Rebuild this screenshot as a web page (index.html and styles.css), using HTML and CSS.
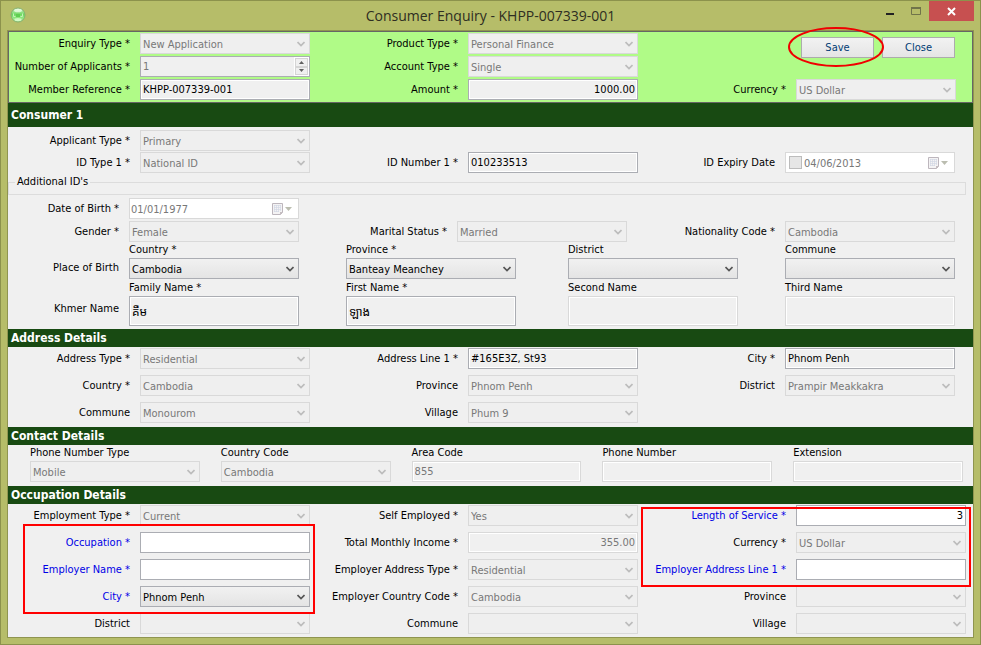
FILE: index.html
```html
<!DOCTYPE html>
<html lang="en">
<head>
<meta charset="utf-8">
<title>Consumer Enquiry - KHPP-007339-001</title>
<link rel="stylesheet" href="styles.css">
</head>
<body>
<div class="window">
  <header class="titlebar">
    <svg class="app-icon" viewBox="0 0 16 16" aria-hidden="true">
      <defs><linearGradient id="orb" x1="0" y1="0" x2="0" y2="1"><stop offset="0" stop-color="#d5f5cd"/><stop offset=".45" stop-color="#6fd862"/><stop offset="1" stop-color="#b5f7a2"/></linearGradient></defs>
      <circle cx="8" cy="8" r="7" fill="url(#orb)" stroke="#84b070"/>
      <ellipse cx="8" cy="3.500" rx="4" ry="1.800" fill="#f4fff0" opacity=".7"/>
      <path d="M3.500 6.500v3h2M12.500 6.500v3h-2" fill="none" stroke="#c4f3b8"/>
      <path d="M6 7h4v3H6z" fill="#5fce52"/>
      <ellipse cx="8" cy="12.500" rx="3.500" ry="1.500" fill="#e2ffd9" opacity=".7"/>
    </svg>
    <h1>Consumer Enquiry - KHPP-007339-001</h1>
    <div class="window-controls">
      <button type="button" class="wc" aria-label="Minimize"><svg viewBox="0 0 11 9"><path d="M1 6h8v2H1z" fill="#222"/></svg></button>
      <button type="button" class="wc" aria-label="Maximize"><svg viewBox="0 0 11 9"><path d="M.5 1.500h9v6h-9z" fill="none" stroke="#70744a"/><path d="M0 1h10" stroke="#70744a" stroke-width="2"/></svg></button>
      <button type="button" class="wc wc-close" aria-label="Close window"><svg viewBox="0 0 11 9"><path d="M2 1l7 7M9 1l-7 7" stroke="#fff" stroke-width="2" fill="none"/></svg></button>
    </div>
  </header>

  <form class="client">
    <section class="grid summary">
      <label for="enquiry">Enquiry Type *</label>
      <select id="enquiry" disabled><option>New Application</option></select>
      <label for="product">Product Type *</label>
      <select id="product" disabled><option>Personal Finance</option></select>
      <div class="actions">
        <span class="marked">
          <button type="button" class="btn">Save</button>
          <svg class="ring" viewBox="0 0 96 40" aria-hidden="true"><ellipse cx="48" cy="20" rx="47" ry="19" fill="none" stroke="#f00000" stroke-width="2"/></svg>
        </span>
        <button type="button" class="btn">Close</button>
      </div>

      <label for="applicants">Number of Applicants *</label>
      <div class="spinner">
        <input id="applicants" type="text" value="1" disabled>
        <span class="arrows">
          <button type="button" aria-label="Increase" disabled><svg viewBox="0 0 5 3"><path d="M0 3l2.500-3L5 3z"/></svg></button>
          <button type="button" aria-label="Decrease" disabled><svg viewBox="0 0 5 3"><path d="M0 0l2.500 3L5 0z"/></svg></button>
        </span>
      </div>
      <label for="account">Account Type *</label>
      <select id="account" disabled><option>Single</option></select>

      <label class="first" for="member">Member Reference *</label>
      <input id="member" type="text" value="KHPP-007339-001" readonly>
      <label for="amount">Amount *</label>
      <input id="amount" class="num" type="text" value="1000.00" readonly>
      <label for="currency">Currency *</label>
      <select id="currency" disabled><option>US Dollar</option></select>
    </section>

    <h2 class="tall">Consumer 1</h2>
    <section>
      <div class="grid identity">
        <label for="applicant">Applicant Type *</label>
        <select id="applicant" disabled><option>Primary</option></select>
        <label class="first" for="idtype">ID Type 1 *</label>
        <select id="idtype" disabled><option>National ID</option></select>
        <label for="idnumber">ID Number 1 *</label>
        <input id="idnumber" type="text" value="010233513" readonly>
        <label for="expiry">ID Expiry Date</label>
        <div class="date">
          <input type="checkbox" aria-label="Expiry date set" disabled>
          <input id="expiry" type="text" value="04/06/2013" disabled>
          <svg class="cal" viewBox="0 0 22 14" aria-hidden="true"><path d="M1.500 1.500h10v9l-2 2h-8z" fill="#f4f3f4" stroke="#bdb6bd"/><path d="M3 3.500h7M3 5.500h7M3 7.500h7M3 9.500h5M3.500 3v7M5.500 3v7M7.500 3v7M9.500 3v6" stroke="#ced5e2" stroke-width=".6"/><path d="M9 13v-3h3z" fill="#c5bec2"/><path d="M14 5h7l-3.500 4z" fill="#bbbdb0"/></svg>
        </div>
      </div>

      <fieldset><legend>Additional ID's</legend></fieldset>

      <div class="grid personal">
        <label for="dob">Date of Birth *</label>
        <div class="date">
          <input id="dob" type="text" value="01/01/1977" disabled>
          <svg class="cal" viewBox="0 0 22 14" aria-hidden="true"><path d="M1.500 1.500h10v9l-2 2h-8z" fill="#f4f3f4" stroke="#bdb6bd"/><path d="M3 3.500h7M3 5.500h7M3 7.500h7M3 9.500h5M3.500 3v7M5.500 3v7M7.500 3v7M9.500 3v6" stroke="#ced5e2" stroke-width=".6"/><path d="M9 13v-3h3z" fill="#c5bec2"/><path d="M14 5h7l-3.500 4z" fill="#bbbdb0"/></svg>
        </div>
        <label class="first" for="gender">Gender *</label>
        <select id="gender" disabled><option>Female</option></select>
        <label for="marital">Marital Status *</label>
        <select id="marital" disabled><option>Married</option></select>
        <label for="nationality">Nationality Code *</label>
        <select id="nationality" disabled><option>Cambodia</option></select>
      </div>

      <div class="grid birth">
        <span class="row-name">Place of Birth</span>
        <div class="stack f1"><label for="bcountry">Country *</label><select id="bcountry"><option>Cambodia</option></select></div>
        <div class="stack f2"><label for="bprovince">Province *</label><select id="bprovince"><option>Banteay Meanchey</option></select></div>
        <div class="stack f3"><label for="bdistrict">District</label><select id="bdistrict"><option></option></select></div>
        <div class="stack f4"><label for="bcommune">Commune</label><select id="bcommune"><option></option></select></div>
      </div>
      <div class="grid birth names">
        <span class="row-name">Khmer Name</span>
        <div class="stack f1"><label for="family">Family Name *</label><input id="family" type="text" lang="km" value="គឹម" readonly></div>
        <div class="stack f2"><label for="firstname">First Name *</label><input id="firstname" type="text" lang="km" value="ឡាង" readonly></div>
        <div class="stack f3"><label for="second">Second Name</label><input id="second" type="text" disabled></div>
        <div class="stack f4"><label for="third">Third Name</label><input id="third" type="text" disabled></div>
      </div>
    </section>

    <h2>Address Details</h2>
    <section class="grid address">
      <label for="addrtype">Address Type *</label>
      <select id="addrtype" disabled><option>Residential</option></select>
      <label for="line1">Address Line 1 *</label>
      <input id="line1" type="text" value="#165E3Z, St93" readonly>
      <label for="city">City *</label>
      <input id="city" type="text" value="Phnom Penh" readonly>
      <label for="acountry">Country *</label>
      <select id="acountry" disabled><option>Cambodia</option></select>
      <label for="aprovince">Province</label>
      <select id="aprovince" disabled><option>Phnom Penh</option></select>
      <label for="adistrict">District</label>
      <select id="adistrict" disabled><option>Prampir Meakkakra</option></select>
      <label for="acommune">Commune</label>
      <select id="acommune" disabled><option>Monourom</option></select>
      <label for="avillage">Village</label>
      <select id="avillage" disabled><option>Phum 9</option></select>
    </section>

    <h2>Contact Details</h2>
    <section class="contact">
      <div class="stack"><label for="ptype">Phone Number Type</label><select id="ptype" disabled><option>Mobile</option></select></div>
      <div class="stack"><label for="pcountry">Country Code</label><select id="pcountry" disabled><option>Cambodia</option></select></div>
      <div class="stack"><label for="parea">Area Code</label><input id="parea" type="text" value="855" disabled></div>
      <div class="stack"><label for="pnumber">Phone Number</label><input id="pnumber" type="text" disabled></div>
      <div class="stack"><label for="pext">Extension</label><input id="pext" type="text" disabled></div>
    </section>

    <h2>Occupation Details</h2>
    <section class="grid occupation">
      <label for="emptype">Employment Type *</label>
      <select id="emptype" disabled><option>Current</option></select>
      <label for="self">Self Employed *</label>
      <select id="self" disabled><option>Yes</option></select>
      <label class="key" for="service">Length of Service *</label>
      <input id="service" class="num edit" type="text" value="3">

      <label class="key" for="occupation">Occupation *</label>
      <input id="occupation" class="edit" type="text">
      <label for="income">Total Monthly Income *</label>
      <input id="income" class="num" type="text" value="355.00" disabled>
      <label for="ocurrency">Currency *</label>
      <select id="ocurrency" disabled><option>US Dollar</option></select>

      <label class="key" for="employer">Employer Name *</label>
      <input id="employer" class="edit" type="text">
      <label for="eaddrtype">Employer Address Type *</label>
      <select id="eaddrtype" disabled><option>Residential</option></select>
      <label class="key" for="eline1">Employer Address Line 1 *</label>
      <input id="eline1" class="edit" type="text">

      <label class="key" for="ecity">City *</label>
      <select id="ecity"><option>Phnom Penh</option></select>
      <label for="ecountry">Employer Country Code *</label>
      <select id="ecountry" disabled><option>Cambodia</option></select>
      <label for="eprovince">Province</label>
      <select id="eprovince" disabled><option></option></select>

      <label for="edistrict">District</label>
      <select id="edistrict" disabled><option></option></select>
      <label for="ecommune">Commune</label>
      <select id="ecommune" disabled><option></option></select>
      <label for="evillage">Village</label>
      <select id="evillage" disabled><option></option></select>

      <div class="highlight highlight-left"></div>
      <div class="highlight highlight-right"></div>
    </section>
  </form>
</div>
</body>
</html>
```
FILE: styles.css
```css
* { box-sizing: border-box; }

body {
  margin: 0;
  font: 11px/14px "DejaVu Sans Condensed", "Noto Sans", "Noto Sans Khmer", sans-serif;
  color: #000;
}

button, input, select { font: inherit; color: inherit; margin: 0; border-radius: 0; }

.window {
  min-height: 100vh;
  display: flex;
  flex-direction: column;
  padding: 0 6px 6px;
  border: 1px solid #8c924c;
  background: #b6bd69;
}

/* Title bar */
.titlebar {
  display: grid;
  grid-template-columns: 1fr auto 1fr;
  height: 29px;
}
.app-icon { width: 16px; height: 16px; margin: 6px 0 0 3px; }
.titlebar h1 {
  margin: 0;
  font: 14px/29px "Open Sans", "Noto Sans", sans-serif;
  color: #2e2e22;
}
.window-controls { display: flex; justify-content: flex-end; align-items: flex-start; }
.wc {
  width: 26px;
  height: 20px;
  padding: 0;
  border: 0;
  background: none;
}
.wc svg { display: block; width: 11px; height: 9px; margin: 0 auto; }
.wc-close { width: 45px; background: #c75050; }

/* Client area */
.client {
  flex: 1;
  border: 1px solid #8f9550;
  background: #f0f0f0;
}
h2 {
  margin: 0;
  padding: 0 3px;
  font: bold 12px/18px "DejaVu Sans Condensed", "Noto Sans", sans-serif;
  color: #fff;
  background: #184a12;
}
h2.tall { line-height: 24px; }

.grid { display: grid; grid-auto-rows: 21px; }
.grid > label {
  padding-right: 10px;
  line-height: 22px;
  text-align: right;
  white-space: nowrap;
}
.first { grid-column: 1; }
.key { color: #0000e6; }

/* Controls */
select, input[type="text"] {
  width: 100%;
  min-width: 0;
  height: 21px;
  border: 1px solid #abadb3;
  outline: 0;
}
select {
  appearance: none;
  padding: 2px 16px 0 2px;
  background:
    url("data:image/svg+xml,%3Csvg xmlns='http://www.w3.org/2000/svg' width='8' height='6'%3E%3Cpath d='M.5 1L4 4.500 7.500 1' fill='none' stroke='%23555' stroke-width='1.700'/%3E%3C/svg%3E") no-repeat right 4px center,
    linear-gradient(#f1f1f1, #e4e4e4);
}
select:disabled {
  opacity: 1;
  color: #787878;
  border-color: #d9d9d9;
  background:
    url("data:image/svg+xml,%3Csvg xmlns='http://www.w3.org/2000/svg' width='8' height='6'%3E%3Cpath d='M.5 1L4 4.500 7.500 1' fill='none' stroke='%23bcbcbc' stroke-width='1.700'/%3E%3C/svg%3E") no-repeat right 4px center,
    #efefef;
}
input[type="text"] {
  padding: 0 2px;
  background: #f0f0f0;
  box-shadow: inset 0 0 0 1px #fff;
}
input[type="text"]:disabled { color: #787878; border-color: #d9d9d9; }
input[type="text"].edit { background: #fff; }
input[type="text"].num { text-align: right; }
input:lang(km) { font-size: 12px; }

.spinner {
  display: flex;
  height: 21px;
  border: 1px solid #abadb3;
  background: #f0f0f0;
}
.spinner input[type="text"] { flex: 1; height: auto; padding: 0 2px; border: 0; box-shadow: none; }
.arrows { display: flex; flex-direction: column; width: 15px; padding: 1px; background: #fff; }
.arrows button {
  flex: 1;
  display: flex;
  align-items: center;
  justify-content: center;
  padding: 0;
  border: 1px solid #d5d5d5;
  background: #f0f0f0;
}
.arrows svg { width: 5px; height: 3px; fill: #606060; }

.date {
  display: flex;
  align-items: center;
  height: 21px;
  padding-right: 5px;
  border: 1px solid #d9d9d9;
  background: #fff;
}
.date input[type="text"] { flex: 1; height: 19px; padding: 1px 1px 0; border: 0; background: none; }
.date input[type="checkbox"] {
  appearance: none;
  flex: none;
  width: 13px;
  height: 13px;
  margin: 0 1px 0 3px;
  border: 1px solid #bcbcbc;
  background: #e6e6e6;
}
.cal { flex: none; width: 22px; height: 14px; }

.btn {
  width: 73px;
  height: 21px;
  padding: 0;
  border: 1px solid #acacac;
  background: linear-gradient(#f2f2f2, #e5e5e5);
  color: #003c74;
}

/* Summary panel */
.summary {
  grid-template-columns: 131fr 170fr 158fr 170fr 158fr 160fr;
  row-gap: 2px;
  padding: 1px 16px 2px 0;
  border: 1px solid #666;
  background: #b0fb87;
}
.actions {
  grid-column: 5 / 7;
  grid-row: 1 / span 2;
  display: flex;
  justify-content: flex-end;
  align-items: flex-start;
  gap: 8px;
  padding: 4px 1px 0 0;
}
.marked { position: relative; display: flex; }
.ring {
  position: absolute;
  left: -13px;
  top: -10px;
  width: 96px;
  height: 40px;
  pointer-events: none;
}

/* Consumer */
.identity {
  grid-template-columns: 132fr 170fr 158fr 170fr 147fr 170fr;
  row-gap: 1px;
  padding: 3px 18px 0 0;
}
fieldset {
  height: 20px;
  margin: 2px 7px 3px 0;
  padding: 0 6px;
  border: 1px solid #dcdcdc;
}
legend { padding: 0 2px; }
.personal {
  grid-template-columns: 121fr 170fr 158fr 170fr 158fr 170fr;
  row-gap: 2px;
  padding-right: 18px;
}
.birth {
  grid-template-columns: 121fr 170fr 47fr 170fr 52fr 170fr 47fr 170fr;
  grid-auto-rows: auto;
  padding-right: 18px;
}
.stack { display: flex; flex-direction: column; }
.stack label { line-height: 16px; white-space: nowrap; }
.row-name { grid-column: 1; padding: 16px 10px 0 0; line-height: 20px; text-align: right; }
.f1 { grid-column: 2; }
.f2 { grid-column: 4; }
.f3 { grid-column: 6; }
.f4 { grid-column: 8; }
.names { padding-bottom: 3px; }
.names .row-name { line-height: 28px; }
.names label { line-height: 17px; }
.names input[type="text"] { height: 30px; }

/* Address */
.address {
  grid-template-columns: 132fr 170fr 158fr 170fr 147fr 170fr;
  row-gap: 6px;
  padding: 1px 18px 4px 0;
}

/* Contact */
.contact {
  display: grid;
  grid-template-columns: repeat(5, 1fr);
  column-gap: 21px;
  padding: 0 10px 4px 22px;
}

/* Occupation */
.occupation {
  position: relative;
  grid-template-columns: 132fr 170fr 158fr 170fr 158fr 170fr;
  row-gap: 6px;
  padding: 1px 7px 3px 0;
}
.highlight { position: absolute; border: 2px solid #f00; pointer-events: none; }
.highlight-left { left: 15px; top: 20px; width: 30.3%; height: 90px; }
.highlight-right { right: 2px; top: 3px; width: 34.2%; height: 80px; }
```
